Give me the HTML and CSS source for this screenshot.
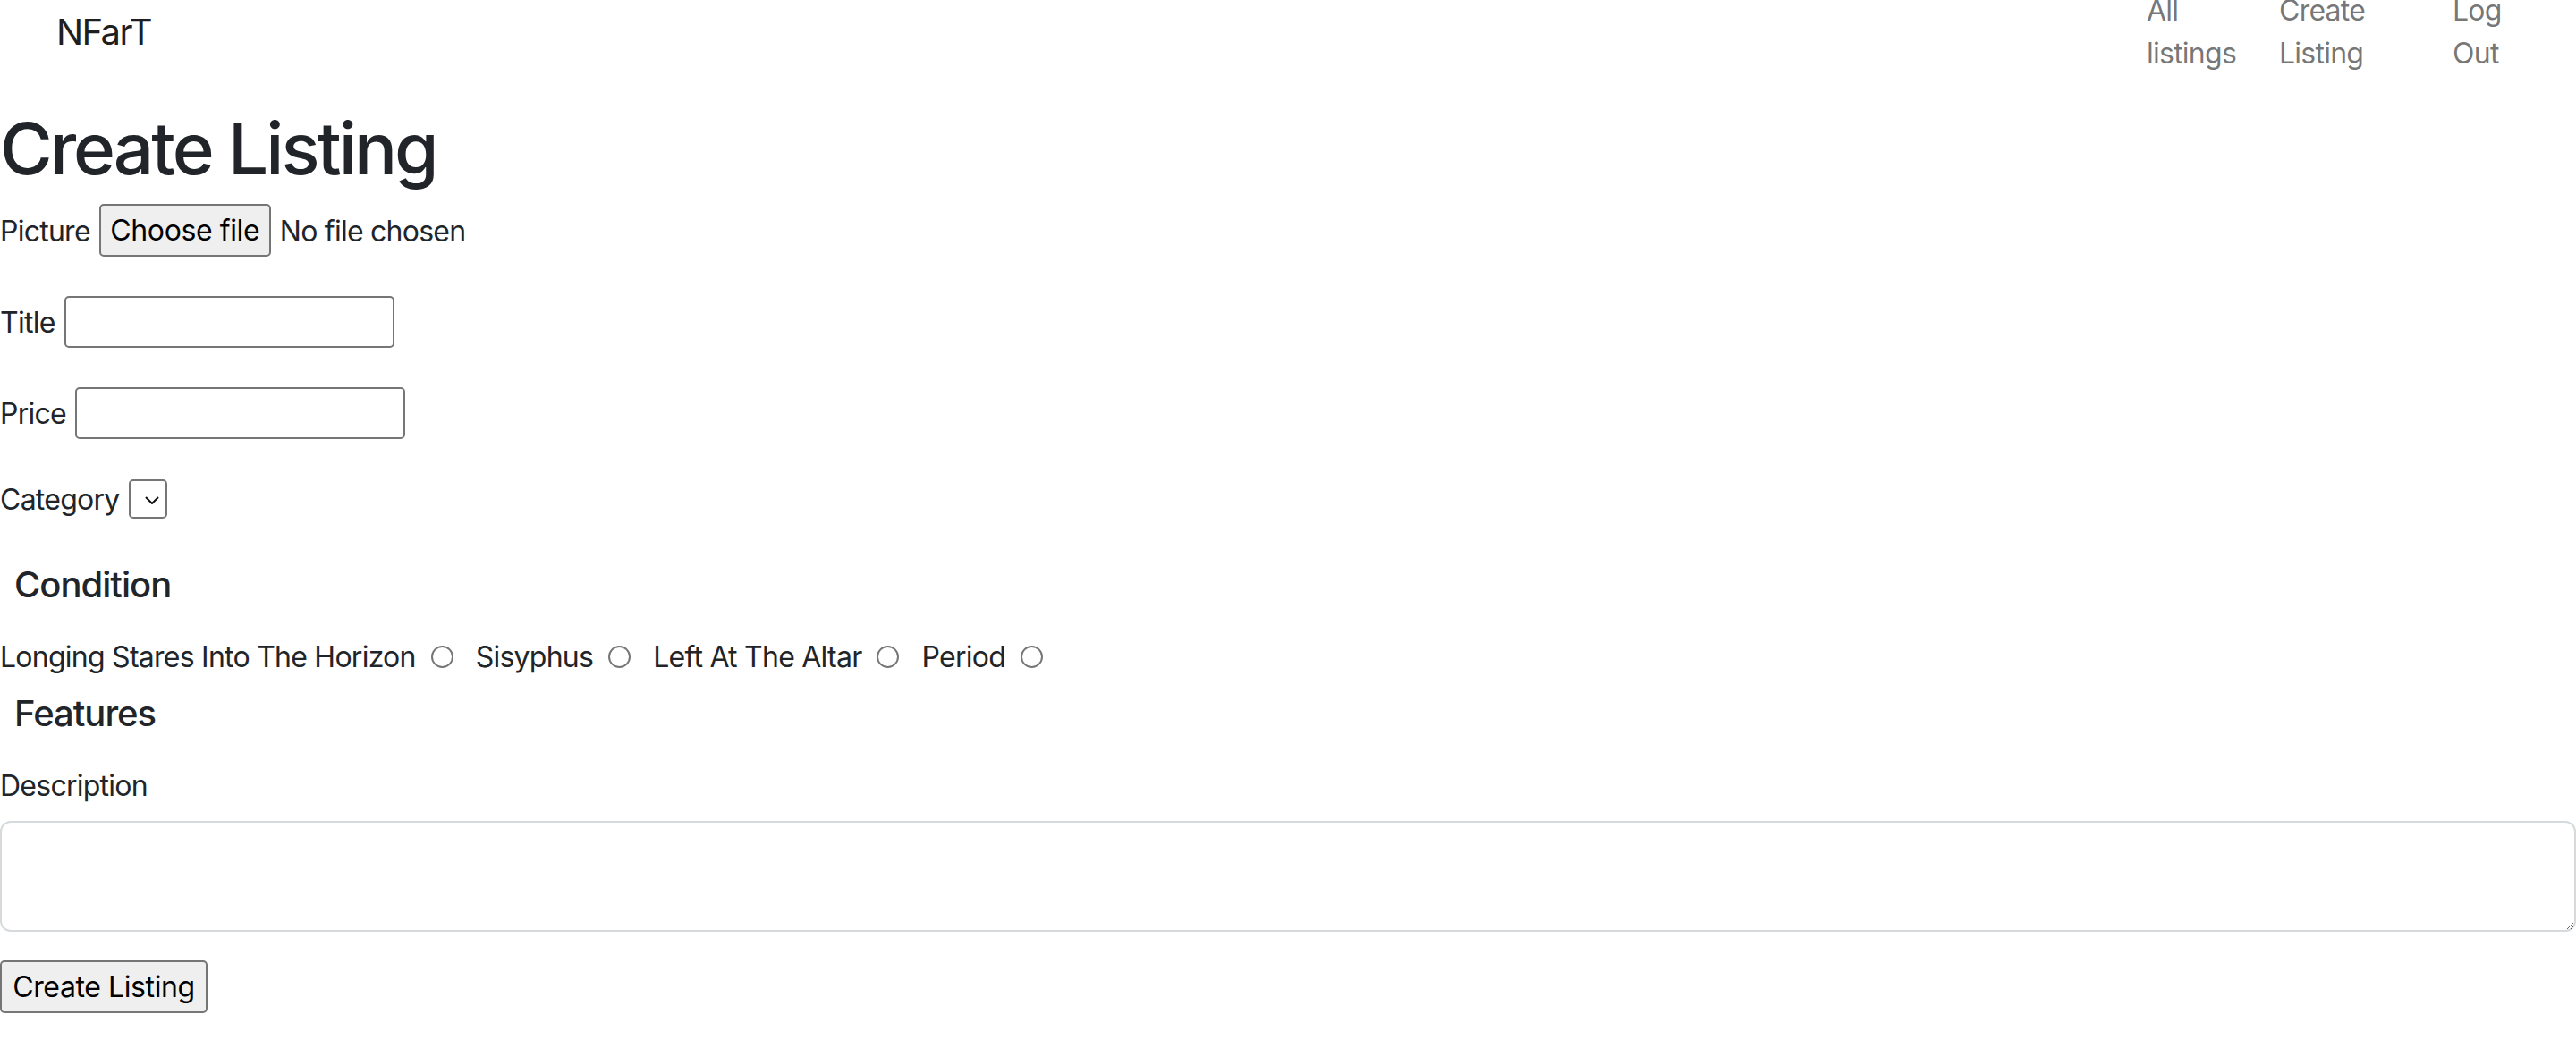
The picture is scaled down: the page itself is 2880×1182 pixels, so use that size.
FILE: index.html
```html
<!DOCTYPE html>
<html lang="en">
<head>
<meta charset="utf-8">
<title>Create Listing</title>
<link rel="stylesheet" href="styles.css">
</head>
<body>
<header class="navbar">
  <a class="brand" href="#">NFarT</a>
  <ul class="nav">
    <li class="nav-item nav-item-all"><a class="nav-link" href="#">All listings</a></li>
    <li class="nav-item nav-item-create"><a class="nav-link" href="#">Create Listing</a></li>
    <li class="nav-item nav-item-logout"><a class="nav-link" href="#">Log Out</a></li>
  </ul>
</header>
<main class="page">
  <h1 class="page-title">Create Listing</h1>
  <form class="form">
    <div class="row row-picture">
      <label class="label">Picture</label>
      <button type="button" class="btn file-btn">Choose file</button>
      <span class="file-name">No file chosen</span>
    </div>
    <div class="row row-input">
      <label class="label">Title</label>
      <input class="text-input" type="text">
    </div>
    <div class="row row-input">
      <label class="label">Price</label>
      <input class="text-input" type="text">
    </div>
    <div class="row row-category">
      <label class="label">Category</label>
      <span class="select-wrap">
        <select class="select"></select>
        <svg class="chevron" width="16" height="9" viewBox="0 0 16 9"><path d="M1 1 L8 8 L15 1" fill="none" stroke="#111" stroke-width="2"/></svg>
      </span>
    </div>
    <h5 class="section-title section-condition">Condition</h5>
    <div class="radios">
      <label class="radio-label">Longing Stares Into The Horizon</label><input class="radio" type="radio" name="condition">
      <label class="radio-label">Sisyphus</label><input class="radio" type="radio" name="condition">
      <label class="radio-label">Left At The Altar</label><input class="radio" type="radio" name="condition">
      <label class="radio-label">Period</label><input class="radio" type="radio" name="condition">
    </div>
    <h5 class="section-title section-features">Features</h5>
    <label class="desc-label">Description</label>
    <textarea class="textarea"></textarea>
    <button type="submit" class="btn submit-btn">Create Listing</button>
  </form>
</main>
</body>
</html>
```
FILE: styles.css
```css
html, body {
  margin: 0;
  padding: 0;
}
body {
  font-family: "Inter", sans-serif;
  font-size: 32px;
  line-height: 1.5;
  letter-spacing: -0.75px;
  color: #212529;
  background: #fff;
}
*, *::before, *::after {
  box-sizing: border-box;
}
.navbar {
  height: 72px;
  display: flex;
  align-items: center;
  justify-content: space-between;
  padding-left: 63px;
}
.brand {
  font-size: 40px;
  line-height: 60px;
  letter-spacing: -1.6px;
  color: rgba(0, 0, 0, 0.9);
  text-decoration: none;
}
.nav {
  display: flex;
  list-style: none;
  margin: 0 14px 0 0;
  padding: 0;
}
.nav-item-all { width: 148px; }
.nav-item-create { width: 194px; }
.nav-item-logout { width: 140px; }
.nav-link {
  display: block;
  padding: 0 16px;
  color: rgba(0, 0, 0, 0.55);
  text-decoration: none;
}
.page-title {
  font-size: 80px;
  font-weight: 500;
  line-height: 96px;
  letter-spacing: -3px;
  margin: 46px 0 0;
}
.form {
  display: flex;
  flex-direction: column;
  align-items: flex-start;
}
.row {
  display: flex;
  align-items: center;
  gap: 10px;
}
.row-picture {
  height: 59px;
  margin-top: 14px;
}
.row-input {
  height: 58px;
  margin-top: 44px;
}
.row-category {
  height: 44px;
  margin-top: 45px;
}
.label,
.file-name,
.radio-label,
.desc-label {
  position: relative;
  top: 1px;
}
.btn {
  font: inherit;
  letter-spacing: -0.4px;
  color: #000;
  background: #efefef;
  border: 2px solid #767676;
  border-radius: 5px;
  padding: 0;
}
.file-btn {
  width: 192px;
  height: 59px;
}
.text-input {
  width: 369px;
  height: 58px;
  border: 2px solid #767676;
  border-radius: 5px;
  background: #fff;
  font: inherit;
}
.select-wrap {
  position: relative;
  display: block;
  width: 43px;
  height: 44px;
}
.select {
  appearance: none;
  -webkit-appearance: none;
  display: block;
  width: 43px;
  height: 44px;
  border: 2px solid #767676;
  border-radius: 5px;
  background: #fff;
  margin: 0;
}
.chevron {
  position: absolute;
  left: 18px;
  top: 19px;
}
.section-title {
  font-size: 40px;
  font-weight: 500;
  line-height: 48px;
  letter-spacing: -1px;
  margin: 0;
  padding-left: 16px;
}
.section-condition {
  margin-top: 50px;
}
.radios {
  display: flex;
  align-items: center;
  height: 48px;
  margin-top: 32px;
}
.radio {
  appearance: none;
  -webkit-appearance: none;
  width: 25px;
  height: 25px;
  border: 2px solid #767676;
  border-radius: 50%;
  background: #fff;
  margin: 0 25px 0 17px;
}
.section-features {
  margin-top: 16px;
}
.desc-label {
  display: block;
  margin-top: 32px;
  line-height: 48px;
}
.textarea {
  display: block;
  width: 100%;
  height: 124px;
  margin-top: 16px;
  border: 2px solid #d6dadd;
  border-radius: 12px;
  font: inherit;
}
.submit-btn {
  width: 232px;
  height: 59px;
  margin-top: 32px;
}
```
